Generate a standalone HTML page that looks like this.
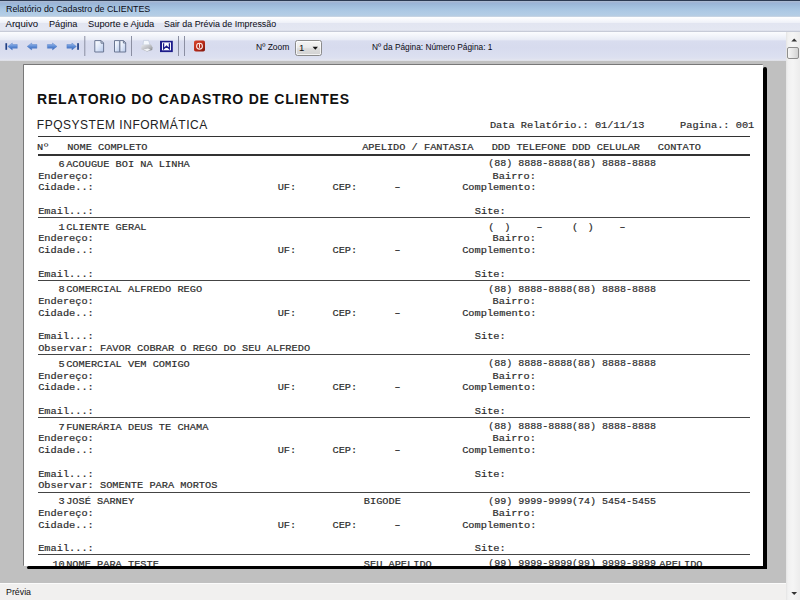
<!DOCTYPE html>
<html lang="pt-BR">
<head>
<meta charset="utf-8">
<title>Relatório do Cadastro de CLIENTES</title>
<style>
html,body{margin:0;padding:0}
body{width:800px;height:600px;overflow:hidden;position:relative;background:#c0c0c0;font-family:"Liberation Sans",sans-serif;color:#111}
div,span,i,svg{position:absolute;display:block}
.title{left:0;top:0;width:800px;height:16.5px;background:linear-gradient(#2c3a52 0,#2c3a52 .8px,#aabbd3 1.3px,#a9bad4 2px,#9db3d5 2.7px,#9bb7d8 4px,#a3c0de 7px,#adc9e4 11px,#b3cde6 15px,#b9cde0 16px,#c6d4e4 16.5px)}
.title span{left:6px;top:3.4px;font-size:9.9px;transform:scaleX(.897);transform-origin:0 0;line-height:12px;white-space:nowrap;color:#0a0a14}
.menu{left:0;top:16.5px;width:800px;height:15.5px;background:linear-gradient(#fff 0,#f7f8fc 3px,#eff1f8 5.5px,#e2e5f1 6.5px,#e4e7f2 13.3px,#c9cdd9 14.1px,#c5c9d6 14.9px,#f4f5fa 15.5px)}
.menu span{transform-origin:0 0;top:1.7px;font-size:9.6px;line-height:12px;white-space:nowrap;color:#0a0a14}
.tool{left:0;top:32px;width:786.2px;height:29px;background:linear-gradient(#fbfcfe 0,#f2f4fa 4px,#e9ecf6 7.5px,#d9ddef 9px,#d7dbee 15px,#dbdff0 24px,#dfe2f0 27px,#e6e8f0 28.2px,#d2d3d9 29px)}
.tool .lbl{transform-origin:0 0;font-size:8.9px;line-height:10px;white-space:nowrap;color:#0a0a14}
.combo{left:294.6px;top:8.1px;width:27px;height:15.8px;box-sizing:border-box;border:1px solid #8b8b8b;border-radius:2.5px;background:linear-gradient(#f4f4f4,#ebebeb 45%,#dcdcdc 55%,#d2d2d2);box-shadow:inset 0 0 0 1px rgba(255,255,255,.7)}
.combo span{left:3.4px;top:1.4px;font-size:9.6px;line-height:12px;color:#111}
.sep{width:1px;top:4px;height:20px;background:#8d90a0}
.page{left:23.5px;top:64.5px;width:739.5px;height:501.2px;background:#fff;overflow:hidden;box-shadow:-.6px -.6px 0 .2px #666}
.shr{left:763px;top:67px;width:4px;height:502px;background:#000;border-radius:2px 2px 0 0}
.shb{left:26.5px;top:565.7px;width:740.5px;height:3.5px;background:#000;border-radius:2px 0 0 2px}
.m{font:10.3px/12px "Liberation Mono",monospace;white-space:pre;color:#2c2c2c;-webkit-text-stroke:.2px #2c2c2c;margin-top:-8.75px;transform:scaleY(.88);transform-origin:0 8.75px}
.r{text-align:right}
.p{font-size:10px;margin-top:-8.1px}
.d{transform:scale(1.45,.88)}
.ln{left:14px;width:712px;height:1.2px}
.h1{font:bold 14px/16px "Liberation Sans",sans-serif;white-space:nowrap;color:#111;font-kerning:none;letter-spacing:.78px}
.h2{font:12px/14px "Liberation Sans",sans-serif;white-space:nowrap;color:#222;font-kerning:none;letter-spacing:.52px}
.status{left:0;top:582.6px;width:786.2px;height:18px;background:#f1f0ef;border-top:1px solid #fbfbfb}
.status span{left:6px;top:2.6px;transform:scaleX(.92);transform-origin:0 0;font-size:9.6px;line-height:12px;color:#111}
.sb{left:786.2px;top:31.5px;width:13.8px;height:568.5px;background:linear-gradient(90deg,#e4e4e4 0,#f1f1f1 2px,#f5f5f5 7px,#ededed 13.5px)}
.thumb{left:1.2px;top:15.6px;width:11.6px;height:11.5px;border:1px solid #8e8e8e;border-radius:2px;box-sizing:border-box;background:linear-gradient(90deg,#f6f6f6,#e2e2e2 60%,#d2d2d2)}
</style>
</head>
<body>
<div class="title"><span>Relatório do Cadastro de CLIENTES</span></div>
<div class="menu">
<span style="left:5.5px">Arquivo</span>
<span style="left:48.6px;transform:scaleX(.95)">Página</span>
<span style="left:88px;transform:scaleX(.97)">Suporte e Ajuda</span>
<span style="left:164.3px;transform:scaleX(.927)">Sair da Prévia de Impressão</span>
</div>
<div class="tool">
<svg style="left:0;top:0" width="240" height="29" viewBox="0 0 240 29">
<defs>
<linearGradient id="ab" x1="0" y1="0" x2="0" y2="1"><stop offset="0" stop-color="#a3c1ee"/><stop offset=".5" stop-color="#5f8dd6"/><stop offset="1" stop-color="#3866b8"/></linearGradient>
<linearGradient id="pg" x1="0" y1="0" x2="1" y2="1"><stop offset="0" stop-color="#ffffff"/><stop offset=".45" stop-color="#e3ebfa"/><stop offset="1" stop-color="#b4c7ea"/></linearGradient>
<linearGradient id="rd" x1="0" y1="0" x2="1" y2="1"><stop offset="0" stop-color="#d8492e"/><stop offset=".5" stop-color="#b82a18"/><stop offset="1" stop-color="#7e160c"/></linearGradient>
<linearGradient id="pr" x1="0" y1="0" x2="1" y2="1"><stop offset="0" stop-color="#e6e8ec"/><stop offset=".6" stop-color="#b4b6ba"/><stop offset="1" stop-color="#77797d"/></linearGradient>
</defs>
<!-- nav arrows -->
<rect x="5.4" y="11.2" width="1.7" height="6.6" fill="#1f3f86"/>
<path id="la" d="M7.8 14.4 L12.3 11 L12.3 12.5 L17.3 12.5 L17.3 16.3 L12.3 16.3 L12.3 17.9 Z" fill="url(#ab)" stroke="#4a76c4" stroke-width=".4"/>
<path d="M27.2 14.4 L31.7 11 L31.7 12.5 L36.9 12.5 L36.9 16.3 L31.7 16.3 L31.7 17.9 Z" fill="url(#ab)" stroke="#4a76c4" stroke-width=".4"/>
<path d="M57 14.4 L52.5 11 L52.5 12.5 L47.4 12.5 L47.4 16.3 L52.5 16.3 L52.5 17.9 Z" fill="url(#ab)" stroke="#4a76c4" stroke-width=".4"/>
<path d="M76.4 14.4 L71.9 11 L71.9 12.5 L66.9 12.5 L66.9 16.3 L71.9 16.3 L71.9 17.9 Z" fill="url(#ab)" stroke="#4a76c4" stroke-width=".4"/>
<rect x="77.2" y="11.2" width="1.7" height="6.6" fill="#1f3f86"/>
<!-- separators -->
<rect x="84.3" y="4" width="1" height="20" fill="#8b8fa2"/>
<rect x="131" y="4" width="1" height="20" fill="#8b8fa2"/>
<rect x="178" y="4" width="1" height="20" fill="#8b8fa2"/>
<rect x="184" y="4" width="1" height="20" fill="#8b8fa2"/>
<!-- single page -->
<path d="M94.8 8.6 L101.2 8.6 L103.6 11 L103.6 20 L94.8 20 Z" fill="url(#pg)" stroke="#6a7793" stroke-width="1" stroke-linejoin="round"/>
<path d="M101 8.8 L101 11.2 L103.4 11.2" fill="none" stroke="#56627e" stroke-width=".8"/>
<!-- two pages -->
<path d="M114.5 8.6 L119.9 8.6 L119.9 20 L114.5 20 Z" fill="url(#pg)" stroke="#6a7793" stroke-width="1" stroke-linejoin="round"/>
<path d="M119.9 8.6 L123.6 8.6 L125.7 10.8 L125.7 20 L119.9 20 Z" fill="url(#pg)" stroke="#6a7793" stroke-width="1" stroke-linejoin="round"/>
<path d="M123.4 8.8 L123.4 11 L125.5 11" fill="none" stroke="#56627e" stroke-width=".8"/>
<!-- printer -->
<path d="M143.6 8.4 L148.6 8.4 L150 13 L143 13 Z" fill="#f4f8fd" stroke="#b9c4d6" stroke-width=".6"/>
<path d="M141.6 13 L151 12.6 L152.6 15.4 L152.2 18 L147 19.6 L141.2 17.2 Z" fill="url(#pr)"/>
<path d="M143.5 17.6 L147 19.2 L150.5 17.8 L148 16.6 Z" fill="#f1f3f6"/>
<!-- W -->
<rect x="160" y="8.8" width="12.8" height="11.3" fill="#1c1c8a"/>
<rect x="162" y="10.4" width="9" height="7.9" fill="#fbfbff"/>
<path d="M163.6 11.2 L163.6 16.9 L166.5 14.2 L169.4 16.9 L169.4 11.2" fill="none" stroke="#1c1c8a" stroke-width="1.25"/>
<!-- red power -->
<rect x="194" y="8.5" width="11" height="11.1" rx="1.8" fill="url(#rd)"/>
<circle cx="199.5" cy="14.2" r="2.9" fill="none" stroke="#fbe9e4" stroke-width="1.1"/>
<rect x="199" y="11.6" width="1" height="4.2" fill="#fbe9e4"/>
</svg>
<div class="combo"><span>1</span><svg style="left:16.7px;top:5.3px" width="7" height="5" viewBox="0 0 7 5"><path d="M0.6 0.8 L6 0.8 L3.3 3.8 Z" fill="#111"/></svg></div>
<span class="lbl" style="left:255.5px;top:10.2px;transform:scaleX(.96)">Nº Zoom</span>
<span class="lbl" style="left:372.3px;top:10.2px;transform:scaleX(.937)">Nº da Página: Número Página: 1</span>
</div>
<div class="sb"><div class="thumb"></div>
<svg style="left:.8px;top:.5px" width="14" height="568" viewBox="0 0 14 568"><path d="M4.3 9.6 L7.2 6.6 L10.1 9.6 Z" fill="#333"/><path d="M4.3 560 L10.1 560 L7.2 563 Z" fill="#333"/></svg>
</div>
<div class="shr"></div><div class="shb"></div>
<div class="page">
<span class="h1" style="left:13.6px;top:26.4px">RELATORIO DO CADASTRO DE CLIENTES</span>
<span class="h2" style="left:13.3px;top:53.5px">FPQSYSTEM INFORMÁTICA</span>
<span class="m" style="left:466.4px;top:63px">Data Relatório.: 01/11/13</span>
<span class="m" style="left:656.6px;top:63px">Pagina.: 001</span>
<i class="ln" style="top:71.6px;background:#333"></i>
<span class="m" style="left:13.4px;top:85.5px">Nº</span>
<span class="m" style="left:43.7px;top:85.5px">NOME COMPLETO</span>
<span class="m" style="left:338.7px;top:85.5px">APELIDO / FANTASIA</span>
<span class="m" style="left:468.2px;top:85.5px">DDD TELEFONE DDD CELULAR</span>
<span class="m" style="left:634.3px;top:85.5px">CONTATO</span>
<i class="ln" style="top:89.9px;background:#333"></i>
<span class="m r" style="left:16.50px;width:24.80px;top:102.00px">6</span>
<span class="m" style="left:42.70px;top:102.00px">ACOUGUE BOI NA LINHA</span>
<span class="m p" style="left:464.80px;top:102.00px">(88) 8888-8888</span>
<span class="m p" style="left:548.50px;top:102.00px">(88) 8888-8888</span>
<span class="m" style="left:14.70px;top:113.75px">Endereço:</span>
<span class="m" style="left:469.10px;top:113.75px">Bairro:</span>
<span class="m" style="left:14.70px;top:125.50px">Cidade..:</span>
<span class="m" style="left:254.20px;top:125.50px">UF:</span>
<span class="m" style="left:309.00px;top:125.50px">CEP:</span>
<span class="m d" style="left:369.70px;top:125.50px">-</span>
<span class="m" style="left:438.70px;top:125.50px">Complemento:</span>
<span class="m" style="left:14.70px;top:149.00px">Email...:</span>
<span class="m" style="left:451.30px;top:149.00px">Site:</span>
<i class="ln" style="top:152.50px;background:#444"></i>
<span class="m r" style="left:16.50px;width:24.80px;top:164.75px">1</span>
<span class="m" style="left:42.70px;top:164.75px">CLIENTE GERAL</span>
<span class="m" style="left:464.80px;top:164.75px">(</span>
<span class="m" style="left:480.80px;top:164.75px">)</span>
<span class="m d" style="left:511.10px;top:164.75px">-</span>
<span class="m" style="left:548.50px;top:164.75px">(</span>
<span class="m" style="left:564.10px;top:164.75px">)</span>
<span class="m d" style="left:594.30px;top:164.75px">-</span>
<span class="m" style="left:14.70px;top:176.50px">Endereço:</span>
<span class="m" style="left:469.10px;top:176.50px">Bairro:</span>
<span class="m" style="left:14.70px;top:188.25px">Cidade..:</span>
<span class="m" style="left:254.20px;top:188.25px">UF:</span>
<span class="m" style="left:309.00px;top:188.25px">CEP:</span>
<span class="m d" style="left:369.70px;top:188.25px">-</span>
<span class="m" style="left:438.70px;top:188.25px">Complemento:</span>
<span class="m" style="left:14.70px;top:211.75px">Email...:</span>
<span class="m" style="left:451.30px;top:211.75px">Site:</span>
<i class="ln" style="top:215.25px;background:#444"></i>
<span class="m r" style="left:16.50px;width:24.80px;top:227.50px">8</span>
<span class="m" style="left:42.70px;top:227.50px">COMERCIAL ALFREDO REGO</span>
<span class="m p" style="left:464.80px;top:227.50px">(88) 8888-8888</span>
<span class="m p" style="left:548.50px;top:227.50px">(88) 8888-8888</span>
<span class="m" style="left:14.70px;top:239.25px">Endereço:</span>
<span class="m" style="left:469.10px;top:239.25px">Bairro:</span>
<span class="m" style="left:14.70px;top:251.00px">Cidade..:</span>
<span class="m" style="left:254.20px;top:251.00px">UF:</span>
<span class="m" style="left:309.00px;top:251.00px">CEP:</span>
<span class="m d" style="left:369.70px;top:251.00px">-</span>
<span class="m" style="left:438.70px;top:251.00px">Complemento:</span>
<span class="m" style="left:14.70px;top:274.50px">Email...:</span>
<span class="m" style="left:451.30px;top:274.50px">Site:</span>
<span class="m" style="left:14.70px;top:286.25px">Observar: FAVOR COBRAR O REGO DO SEU ALFREDO</span>
<i class="ln" style="top:289.75px;background:#444"></i>
<span class="m r" style="left:16.50px;width:24.80px;top:302.00px">5</span>
<span class="m" style="left:42.70px;top:302.00px">COMERCIAL VEM COMIGO</span>
<span class="m p" style="left:464.80px;top:302.00px">(88) 8888-8888</span>
<span class="m p" style="left:548.50px;top:302.00px">(88) 8888-8888</span>
<span class="m" style="left:14.70px;top:313.75px">Endereço:</span>
<span class="m" style="left:469.10px;top:313.75px">Bairro:</span>
<span class="m" style="left:14.70px;top:325.50px">Cidade..:</span>
<span class="m" style="left:254.20px;top:325.50px">UF:</span>
<span class="m" style="left:309.00px;top:325.50px">CEP:</span>
<span class="m d" style="left:369.70px;top:325.50px">-</span>
<span class="m" style="left:438.70px;top:325.50px">Complemento:</span>
<span class="m" style="left:14.70px;top:349.00px">Email...:</span>
<span class="m" style="left:451.30px;top:349.00px">Site:</span>
<i class="ln" style="top:352.50px;background:#444"></i>
<span class="m r" style="left:16.50px;width:24.80px;top:364.75px">7</span>
<span class="m" style="left:42.70px;top:364.75px">FUNERÁRIA DEUS TE CHAMA</span>
<span class="m p" style="left:464.80px;top:364.75px">(88) 8888-8888</span>
<span class="m p" style="left:548.50px;top:364.75px">(88) 8888-8888</span>
<span class="m" style="left:14.70px;top:376.50px">Endereço:</span>
<span class="m" style="left:469.10px;top:376.50px">Bairro:</span>
<span class="m" style="left:14.70px;top:388.25px">Cidade..:</span>
<span class="m" style="left:254.20px;top:388.25px">UF:</span>
<span class="m" style="left:309.00px;top:388.25px">CEP:</span>
<span class="m d" style="left:369.70px;top:388.25px">-</span>
<span class="m" style="left:438.70px;top:388.25px">Complemento:</span>
<span class="m" style="left:14.70px;top:411.75px">Email...:</span>
<span class="m" style="left:451.30px;top:411.75px">Site:</span>
<span class="m" style="left:14.70px;top:423.50px">Observar: SOMENTE PARA MORTOS</span>
<i class="ln" style="top:427.00px;background:#444"></i>
<span class="m r" style="left:16.50px;width:24.80px;top:439.25px">3</span>
<span class="m" style="left:42.70px;top:439.25px">JOSÉ SARNEY</span>
<span class="m" style="left:340.30px;top:439.25px">BIGODE</span>
<span class="m p" style="left:464.80px;top:439.25px">(99) 9999-9999</span>
<span class="m p" style="left:548.50px;top:439.25px">(74) 5454-5455</span>
<span class="m" style="left:14.70px;top:451.00px">Endereço:</span>
<span class="m" style="left:469.10px;top:451.00px">Bairro:</span>
<span class="m" style="left:14.70px;top:462.75px">Cidade..:</span>
<span class="m" style="left:254.20px;top:462.75px">UF:</span>
<span class="m" style="left:309.00px;top:462.75px">CEP:</span>
<span class="m d" style="left:369.70px;top:462.75px">-</span>
<span class="m" style="left:438.70px;top:462.75px">Complemento:</span>
<span class="m" style="left:14.70px;top:486.25px">Email...:</span>
<span class="m" style="left:451.30px;top:486.25px">Site:</span>
<i class="ln" style="top:489.75px;background:#444"></i>
<span class="m r" style="left:16.50px;width:24.80px;top:502.00px">10</span>
<span class="m" style="left:42.70px;top:502.00px">NOME PARA TESTE</span>
<span class="m" style="left:340.30px;top:502.00px">SEU APELIDO</span>
<span class="m p" style="left:464.80px;top:502.00px">(99) 9999-9999</span>
<span class="m p" style="left:548.50px;top:502.00px">(99) 9999-9999</span>
<span class="m" style="left:635.80px;top:502.00px">APELIDO</span>
<span class="m" style="left:14.70px;top:513.75px">Endereço:</span>
<span class="m" style="left:469.10px;top:513.75px">Bairro:</span>
<span class="m" style="left:14.70px;top:525.50px">Cidade..:</span>
<span class="m" style="left:254.20px;top:525.50px">UF:</span>
<span class="m" style="left:309.00px;top:525.50px">CEP:</span>
<span class="m d" style="left:369.70px;top:525.50px">-</span>
<span class="m" style="left:438.70px;top:525.50px">Complemento:</span>
<span class="m" style="left:14.70px;top:549.00px">Email...:</span>
<span class="m" style="left:451.30px;top:549.00px">Site:</span>
<i class="ln" style="top:552.50px;background:#444"></i>
</div>
<div class="status"><span>Prévia</span></div>
</body>
</html>
